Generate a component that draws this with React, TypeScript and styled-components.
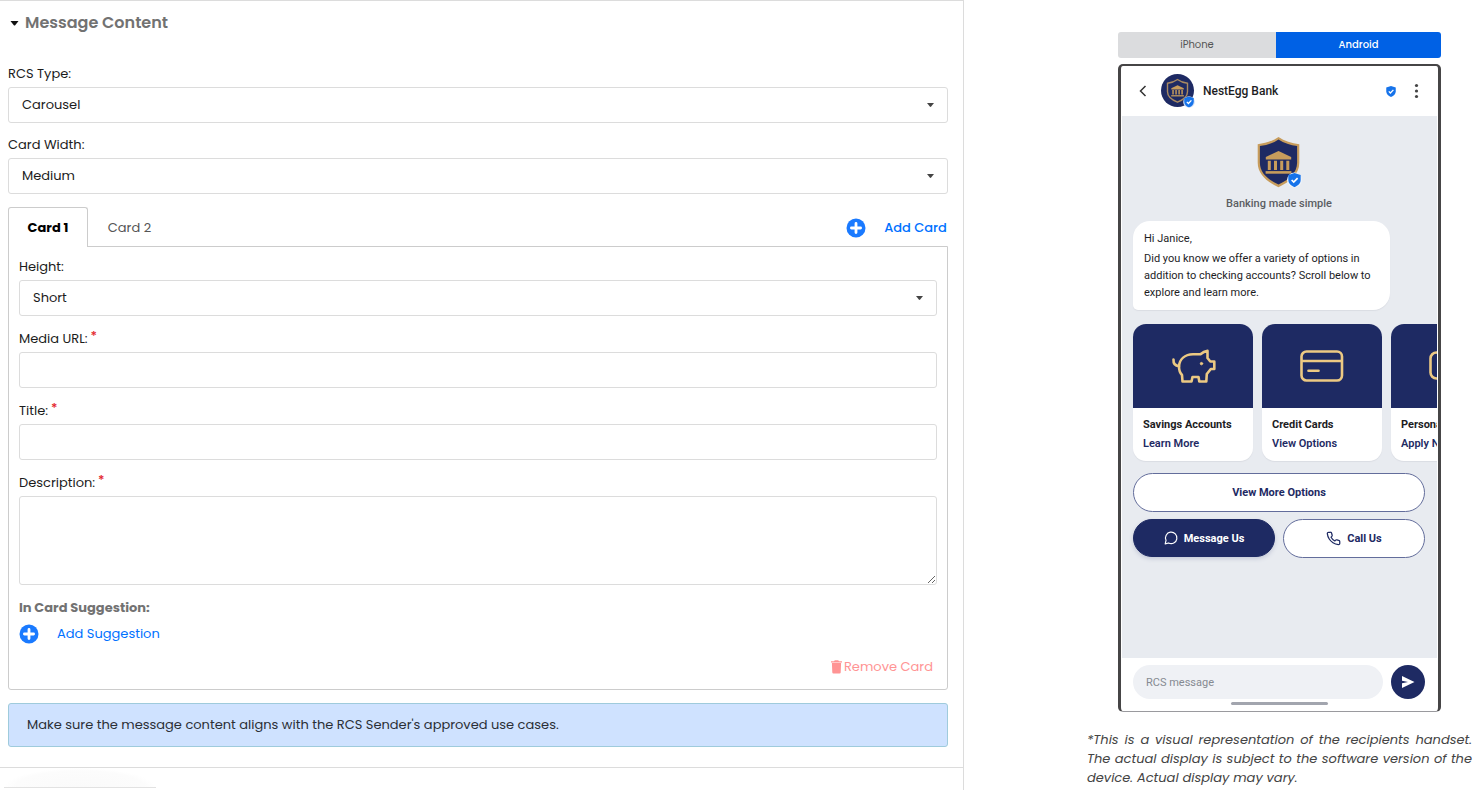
import React, { useState } from "react";
import styled, { createGlobalStyle, css } from "styled-components";

const navy = "#1e2a63";
const blue = "#0071ff";
const line = "#dcdcdc";

const GlobalStyle = createGlobalStyle`
  *, *::before, *::after { box-sizing: border-box; }
  body {
    margin: 0;
    background: #fff;
    color: #1c1c1c;
    font-family: Poppins, Inter, "Liberation Sans", sans-serif;
    font-size: 13px;
    line-height: 20px;
  }
  button, input, select, textarea { font: inherit; color: inherit; }
  button { background: none; border: 0; padding: 0; cursor: pointer; }
`;

const Page = styled.main`
  display: grid;
  grid-template-columns: 65% 1fr;
  height: 100vh;
  overflow: hidden;
`;

const Editor = styled.section`
  border-top: 1px solid ${line};
  border-right: 1px solid ${line};
`;

const SectionBody = styled.div`
  padding: 12px 15px 20px 8px;
  border-bottom: 1px solid ${line};
`;

const SectionToggle = styled.button`
  display: flex;
  align-items: center;
  gap: 6px;
  margin-bottom: 31px;
  padding-left: 2px;
  color: #727272;
  font-size: 16px;
  font-weight: 600;
`;

const Field = styled.div`
  margin-bottom: 12px;
`;

const Label = styled.label`
  display: block;
  margin-bottom: 3px;
`;

const Required = styled.span`
  margin-left: 3px;
  color: #e3242b;
  font-weight: 500;
  vertical-align: 3px;
  line-height: 1;
`;

const box = css`
  display: block;
  width: 100%;
  border: 1px solid ${line};
  border-radius: 3px;
  background: #fff;
  outline: none;
`;

const Input = styled.input`
  ${box}
  height: 36px;
  padding: 0 13px;
`;

const TextArea = styled.textarea`
  ${box}
  height: 89px;
  padding: 8px 13px;
  resize: vertical;
`;

const SelectBox = styled.div`
  position: relative;
  svg {
    position: absolute;
    right: 14px;
    top: 16px;
    pointer-events: none;
  }
`;

const SelectControl = styled.select`
  ${box}
  height: 36px;
  padding: 0 13px;
  appearance: none;
`;

const TabBar = styled.div`
  display: flex;
  align-items: flex-start;
  height: 39px;
  margin-top: 13px;
`;

const Tab = styled.button<{ $active: boolean }>`
  min-width: 80px;
  height: 40px;
  padding: 2px 0 0 3px;
  color: #555;
  ${(p) =>
    p.$active &&
    css`
      position: relative;
      padding: 0;
      border: 1px solid #ccc;
      border-bottom: 0;
      border-radius: 3px 3px 0 0;
      background: #fff;
      color: #000;
      font-weight: 700;
    `}
`;

const AddButton = styled.button<{ $strong?: boolean }>`
  display: flex;
  align-items: center;
  gap: 18px;
  color: ${blue};
  font-weight: ${(p) => (p.$strong ? 500 : 400)};
`;

const TabAction = styled.div`
  display: flex;
  align-items: center;
  height: 42px;
  margin-left: auto;
  padding-right: 1px;
`;

const CardPanel = styled.div`
  margin-bottom: 13px;
  padding: 10px;
  border: 1px solid #ccc;
  border-radius: 0 0 3px 3px;
`;

const CardField = styled(Field)`
  margin-bottom: 13px;
`;

const SubHeading = styled.h3`
  margin: 0 0 6px;
  color: #727272;
  font-size: 13px;
  font-weight: 700;
`;

const RemoveButton = styled.button`
  display: flex;
  align-items: center;
  gap: 2px;
  margin: 13px 4px 2px auto;
  color: #ff9494;
`;

const Notice = styled.p`
  margin: 0;
  padding: 11px 18px;
  border: 1px solid #9fcbdc;
  border-radius: 3px;
  background: #cfe2ff;
  color: #2b2f36;
`;

const Smudge = styled.div`
  width: 152px;
  height: 20px;
  margin-left: 4px;
  border-bottom: 1px solid #e2e2e2;
  background: radial-gradient(ellipse at 50% 100%, #fafafa 0%, #fcfcfc 60%, #fff 70%);
`;

const Preview = styled.aside`
  width: 385px;
  max-width: 100%;
  margin: 32px 11px 0 auto;
`;

const Device = styled.div`
  width: 323px;
  margin: 0 auto 18px;
`;

const DeviceSwitch = styled.div`
  display: flex;
  height: 26px;
  margin-bottom: 6px;
  border-radius: 3px;
  overflow: hidden;
`;

const DeviceOption = styled.button<{ $active?: boolean }>`
  flex: ${(p) => (p.$active ? "0 0 165px" : "1")};
  background: ${(p) => (p.$active ? "#0061e5" : "#dbdcde")};
  color: ${(p) => (p.$active ? "#fff" : "#555")};
  font-size: 10px;
  font-weight: ${(p) => (p.$active ? 500 : 400)};
`;

const Phone = styled.div`
  display: flex;
  flex-direction: column;
  height: 648px;
  border: solid #464546;
  border-width: 2px 3px 1px;
  border-radius: 5px;
  border-bottom-color: #9a9a9e;
  background: #fff;
  color: #1d1d1f;
  font-family: Roboto, "Liberation Sans", sans-serif;
  font-size: 11px;
  line-height: 17px;
`;

const PhoneHeader = styled.header`
  display: flex;
  align-items: center;
  height: 50px;
  padding: 0 17px 0 18px;
`;

const Avatar = styled.svg`
  margin: 0 8px 0 14px;
`;

const ContactName = styled.h2`
  margin: 0 auto 0 0;
  font-size: 12px;
  font-weight: 500;
`;

const IconButton = styled.button`
  display: flex;
`;

const Conversation = styled.div`
  flex: 1;
  margin: 0 1px;
  padding: 21px 0 0 11px;
  overflow: hidden;
  background: #e8ebf0;
`;

const Brand = styled.div`
  display: flex;
  flex-direction: column;
  align-items: center;
  margin: 0 12px 9px 0;
  color: #5b5d62;
  font-weight: 500;
  svg { margin-bottom: 6px; }
`;

const Bubble = styled.div`
  width: 257px;
  height: 89px;
  margin-bottom: 14px;
  padding: 9px 11px;
  border-radius: 17px 17px 17px 5px;
  background: #fff;
  box-shadow: 0 1px 1px #dadde3;
  p { margin: 0 0 3px; white-space: nowrap; }
`;

const Carousel = styled.div`
  display: flex;
  gap: 9px;
  margin-bottom: 12px;
`;

const OfferCard = styled.article`
  flex: 0 0 120px;
  height: 137px;
  border-radius: 13px;
  overflow: hidden;
  background: #fff;
  box-shadow: 0 1px 1px #dadde3;
  white-space: nowrap;
`;

const OfferMedia = styled.div`
  display: flex;
  align-items: center;
  justify-content: center;
  height: 84px;
  background: ${navy};
`;

const OfferText = styled.div`
  display: flex;
  flex-direction: column;
  align-items: flex-start;
  gap: 2px;
  padding: 8px 10px;
  font-weight: 700;
  line-height: 17px;
`;

const OfferLink = styled.a`
  color: ${navy};
  font-weight: 600;
  text-decoration: none;
`;

const Replies = styled.div`
  display: flex;
  flex-wrap: wrap;
  gap: 7px 8px;
  margin-right: 12px;
`;

const Reply = styled.button<{ $filled?: boolean; $wide?: boolean }>`
  display: flex;
  flex: ${(p) => (p.$wide ? "1 0 100%" : "1 0 0")};
  align-items: center;
  justify-content: center;
  gap: 6px;
  height: ${(p) => (p.$filled ? 38 : 39)}px;
  border: 1px solid ${(p) => (p.$filled ? navy : "#636d9b")};
  border-radius: 20px;
  background: ${(p) => (p.$filled ? navy : "#fff")};
  box-shadow: ${(p) => (p.$filled ? "0 2px 4px #c5cad8" : "none")};
  color: ${(p) => (p.$filled ? "#fff" : navy)};
  font-weight: 700;
`;

const Composer = styled.footer`
  height: 53px;
  padding: 7px 13px 0 12px;
`;

const ComposerRow = styled.div`
  display: flex;
  gap: 8px;
`;

const MessageInput = styled.input`
  flex: 1;
  min-width: 0;
  height: 34px;
  padding: 0 13px;
  border: 0;
  border-radius: 17px;
  background: #eff1f5;
  &::placeholder { color: #868a92; opacity: 1; }
`;

const SendButton = styled.button`
  display: flex;
  align-items: center;
  justify-content: center;
  width: 34px;
  height: 34px;
  border-radius: 50%;
  background: ${navy};
`;

const HomeBar = styled.div`
  width: 97px;
  height: 3px;
  margin: 3px auto 0;
  border-radius: 2px;
  background: #a2a5ae;
`;

const Disclaimer = styled.p`
  margin: 0;
  color: #444;
  font-style: italic;
  line-height: 19px;
  text-align: justify;
`;

const Caret = () => (
  <svg width="7" height="4" viewBox="0 0 7 4" aria-hidden="true">
    <path d="M0 0h7L4.2 3.6a1 1 0 0 1-1.4 0z" fill="#444" />
  </svg>
);

const PlusCircle = () => (
  <svg width="20" height="20" viewBox="0 0 20 20" aria-hidden="true">
    <circle cx="10" cy="10" r="9.5" fill="#1a7aff" />
    <path d="M10 5.4v9.2M5.4 10h9.2" stroke="#fff" strokeWidth="2.8" strokeLinecap="round" />
  </svg>
);

const Trash = () => (
  <svg width="11" height="14" viewBox="0 0 11 14" aria-hidden="true" fill="#ff9494">
    <path d="M0 1.2h3L3.8.2h3.4l.8 1h3v1.4H0z" />
    <path d="M.9 3.1h9.2l-.4 9.4a1.2 1.2 0 0 1-1.2 1.1h-6a1.2 1.2 0 0 1-1.2-1.1z" />
  </svg>
);

const Verified = ({ x = 0, y = 0, size = 10 }: { x?: number; y?: number; size?: number }) => (
  <svg x={x} y={y} width={size} height={size * 1.1} viewBox="0 0 20 22" aria-hidden="true">
    <path d="M10 0l9.5 3.2v7.3c0 5.3-3.8 9.2-9.5 11.3C4.3 19.7.5 15.8.5 10.5V3.2z" fill="#1673ea" />
    <path d="M5.6 10.8l3.2 3.2 6-6.2" fill="none" stroke="#fff" strokeWidth="2.6" />
  </svg>
);

const Bank = () => (
  <>
    <path d="M21.5 14.5l12.7 6V23H8.8v-2.5z" />
    <path d="M10.8 24.3h3v9.2h-3zM17 24.3h3v9.2h-3zM23.2 24.3h3v9.2h-3zM29.3 24.3h3v9.2h-3z" />
    <path d="M8.6 34.6h25.8v2.6H8.6z" />
  </>
);

const BrandShield = () => (
  <svg width="45" height="52" viewBox="0 0 45 52" aria-hidden="true">
    <path d="M21.5 0c6 4.2 13 6.300 20.800 7.300v18.500c0 11.500-9.500 19.200-20.800 24.400C10.200 45 .7 37.300.7 25.800V7.300C8.500 6.300 15.500 4.200 21.500 0z" fill="#c79c5c" />
    <path d="M21.5 2.500c5.500 3.700 11.800 5.700 18.600 6.600v16.700c0 10-8 16.900-18.600 21.800C10.900 42.700 2.900 35.800 2.900 25.800V9.100c6.800-.9 13.100-2.900 18.600-6.600z" fill={navy} />
    <g fill="#c79c5c" transform="translate(0 -.5)"><Bank /></g>
    <circle cx="37.5" cy="43" r="7.5" fill="#eef3fa" />
    <Verified x={31} y={36} size={13} />
  </svg>
);

const BrandAvatar = () => (
  <Avatar width="34" height="34" viewBox="0 0 34 34" aria-hidden="true">
    <circle cx="16.5" cy="16.5" r="16.5" fill={navy} />
    <path d="M16.5 5.500c3 2.200 6 3.300 10 3.800v8.500c0 4.800-4 8-10 10.400-6-2.400-10-5.600-10-10.400V9.300c4-.5 7-1.600 10-3.800z" fill="none" stroke="#a98a62" strokeWidth="1.4" />
    <g fill="#c79c5c" transform="translate(6 4.2) scale(.49)"><Bank /></g>
    <circle cx="28" cy="28" r="5.8" fill="#cfe0f8" />
    <Verified x={23} y={22.5} size={10} />
  </Avatar>
);

const Piggy = () => (
  <svg width="42" height="34" viewBox="0 0 42 34" fill="none" stroke="#ecc983" strokeWidth="2.6" strokeLinejoin="round" strokeLinecap="round" overflow="visible" aria-hidden="true">
    <path d="M1.5 10.500C1.200 15 3 16.800 7 17.200" />
    <path d="M7 17.500C7.500 10 13 5.500 21 5.300h7.500c2-1.800 4-3 7-3.400L35.500 9l2.800 3.500h4V20h-3.500l-4 5-.5 7.500h-7L26.500 28h-6l-1 4.500h-9L10 26C8 24 7 21 7 17.500z" />
    <circle cx="29.5" cy="14.6" r="1.2" fill="#ecc983" strokeWidth="1" />
  </svg>
);

const CreditCard = () => (
  <svg width="44" height="32" viewBox="0 0 44 32" fill="none" stroke="#ecc983" strokeWidth="2.6" aria-hidden="true">
    <rect x="1.5" y="1.5" width="40.5" height="29" rx="5" />
    <path d="M1.5 11H42" />
    <path d="M8.5 20.8h10" strokeLinecap="round" />
  </svg>
);

const Chat = () => (
  <svg width="14" height="14" viewBox="0 0 24 24" fill="none" stroke="#fff" strokeWidth="2" strokeLinejoin="round" aria-hidden="true">
    <path d="M7.9 20.5A9.800 9.800 0 1 0 3.500 16L2 22z" />
  </svg>
);

const Handset = () => (
  <svg width="15" height="15" viewBox="0 0 24 24" fill="none" stroke={navy} strokeWidth="2" strokeLinejoin="round" aria-hidden="true">
    <path d="M22 16.920v3a2 2 0 0 1-2.180 2 19.790 19.790 0 0 1-8.630-3.070 19.500 19.500 0 0 1-6-6 19.790 19.790 0 0 1-3.070-8.670A2 2 0 0 1 4.110 2h3a2 2 0 0 1 2 1.720c.13.960.36 1.900.7 2.810a2 2 0 0 1-.45 2.110L8.090 9.910a16 16 0 0 0 6 6l1.270-1.270a2 2 0 0 1 2.110-.45c.91.340 1.850.57 2.810.7A2 2 0 0 1 22 16.920z" />
  </svg>
);

function Select({ id, value, options }: { id: string; value: string; options: string[] }) {
  return (
    <SelectBox>
      <SelectControl id={id} defaultValue={value}>
        {options.map((o) => (
          <option key={o}>{o}</option>
        ))}
      </SelectControl>
      <Caret />
    </SelectBox>
  );
}

export default function App() {
  const [card, setCard] = useState(0);

  return (
    <>
      <GlobalStyle />
      <Page>
        <Editor>
          <SectionBody>
            <SectionToggle aria-expanded="true">
              <svg width="9" height="5" viewBox="0 0 9 5" aria-hidden="true">
                <path d="M.5 0h8L5.2 4.2a1 1 0 0 1-1.4 0z" fill="#111" />
              </svg>
              Message Content
            </SectionToggle>

            <Field>
              <Label htmlFor="rcs-type">RCS Type:</Label>
              <Select id="rcs-type" value="Carousel" options={["Carousel", "Rich Card", "Text"]} />
            </Field>
            <Field>
              <Label htmlFor="card-width">Card Width:</Label>
              <Select id="card-width" value="Medium" options={["Small", "Medium"]} />
            </Field>

            <TabBar role="tablist">
              {["Card 1", "Card 2"].map((name, i) => (
                <Tab key={name} role="tab" aria-selected={card === i} $active={card === i} onClick={() => setCard(i)}>
                  {name}
                </Tab>
              ))}
              <TabAction>
                <AddButton $strong>
                  <PlusCircle />
                  Add Card
                </AddButton>
              </TabAction>
            </TabBar>

            <CardPanel role="tabpanel">
              <CardField>
                <Label htmlFor="height">Height:</Label>
                <Select id="height" value="Short" options={["Short", "Medium", "Tall"]} />
              </CardField>
              <CardField>
                <Label htmlFor="media">Media URL:<Required>*</Required></Label>
                <Input id="media" />
              </CardField>
              <CardField>
                <Label htmlFor="title">Title:<Required>*</Required></Label>
                <Input id="title" />
              </CardField>
              <CardField>
                <Label htmlFor="description">Description:<Required>*</Required></Label>
                <TextArea id="description" />
              </CardField>
              <SubHeading>In Card Suggestion:</SubHeading>
              <AddButton>
                <PlusCircle />
                Add Suggestion
              </AddButton>
              <RemoveButton>
                <Trash />
                Remove Card
              </RemoveButton>
            </CardPanel>

            <Notice>Make sure the message content aligns with the RCS Sender's approved use cases.</Notice>
          </SectionBody>
          <Smudge />
        </Editor>

        <Preview>
          <Device>
            <DeviceSwitch>
              <DeviceOption>iPhone</DeviceOption>
              <DeviceOption $active>Android</DeviceOption>
            </DeviceSwitch>
            <Phone>
              <PhoneHeader>
                <IconButton aria-label="Back">
                  <svg width="8" height="12" viewBox="0 0 8 12" fill="none" stroke="#333" strokeWidth="1.5">
                    <path d="M6.5 1L1.5 6l5 5" />
                  </svg>
                </IconButton>
                <BrandAvatar />
                <ContactName>NestEgg Bank</ContactName>
                <Verified size={10} />
                <IconButton aria-label="More">
                  <svg width="25" height="16" viewBox="0 0 25 16" fill="#444">
                    <circle cx="20.5" cy="2.5" r="1.6" />
                    <circle cx="20.5" cy="8" r="1.6" />
                    <circle cx="20.5" cy="13.5" r="1.6" />
                  </svg>
                </IconButton>
              </PhoneHeader>

              <Conversation>
                <Brand>
                  <BrandShield />
                  Banking made simple
                </Brand>
                <Bubble>
                  <p>Hi Janice,</p>
                  <p>
                    Did you know we offer a variety of options in
                    <br />
                    addition to checking accounts? Scroll below to
                    <br />
                    explore and learn more.
                  </p>
                </Bubble>
                <Carousel>
                  <OfferCard>
                    <OfferMedia><Piggy /></OfferMedia>
                    <OfferText>
                      Savings Accounts
                      <OfferLink href="#savings">Learn More</OfferLink>
                    </OfferText>
                  </OfferCard>
                  <OfferCard>
                    <OfferMedia><CreditCard /></OfferMedia>
                    <OfferText>
                      Credit Cards
                      <OfferLink href="#credit">View Options</OfferLink>
                    </OfferText>
                  </OfferCard>
                  <OfferCard>
                    <OfferMedia>
                      <svg width="44" height="30" viewBox="0 0 44 30" fill="none" stroke="#ecc983" strokeWidth="2.6" aria-hidden="true">
                        <rect x="1.5" y="1.5" width="40" height="26" rx="6" />
                      </svg>
                    </OfferMedia>
                    <OfferText>
                      Personal Loans
                      <OfferLink href="#loans">Apply Now</OfferLink>
                    </OfferText>
                  </OfferCard>
                </Carousel>
                <Replies>
                  <Reply $wide>View More Options</Reply>
                  <Reply $filled><Chat />Message Us</Reply>
                  <Reply><Handset />Call Us</Reply>
                </Replies>
              </Conversation>

              <Composer>
                <ComposerRow>
                  <MessageInput aria-label="RCS message" placeholder="RCS message" />
                  <SendButton aria-label="Send">
                    <svg width="14" height="14" viewBox="0 0 14 14" fill="#fff">
                      <path d="M1 1l12.5 6L1 13V8.200L7 7 1 5.800z" />
                    </svg>
                  </SendButton>
                </ComposerRow>
                <HomeBar />
              </Composer>
            </Phone>
          </Device>
          <Disclaimer>
            *This is a visual representation of the recipients handset. The actual display is subject to the
            software version of the device. Actual display may vary.
          </Disclaimer>
        </Preview>
      </Page>
    </>
  );
}
